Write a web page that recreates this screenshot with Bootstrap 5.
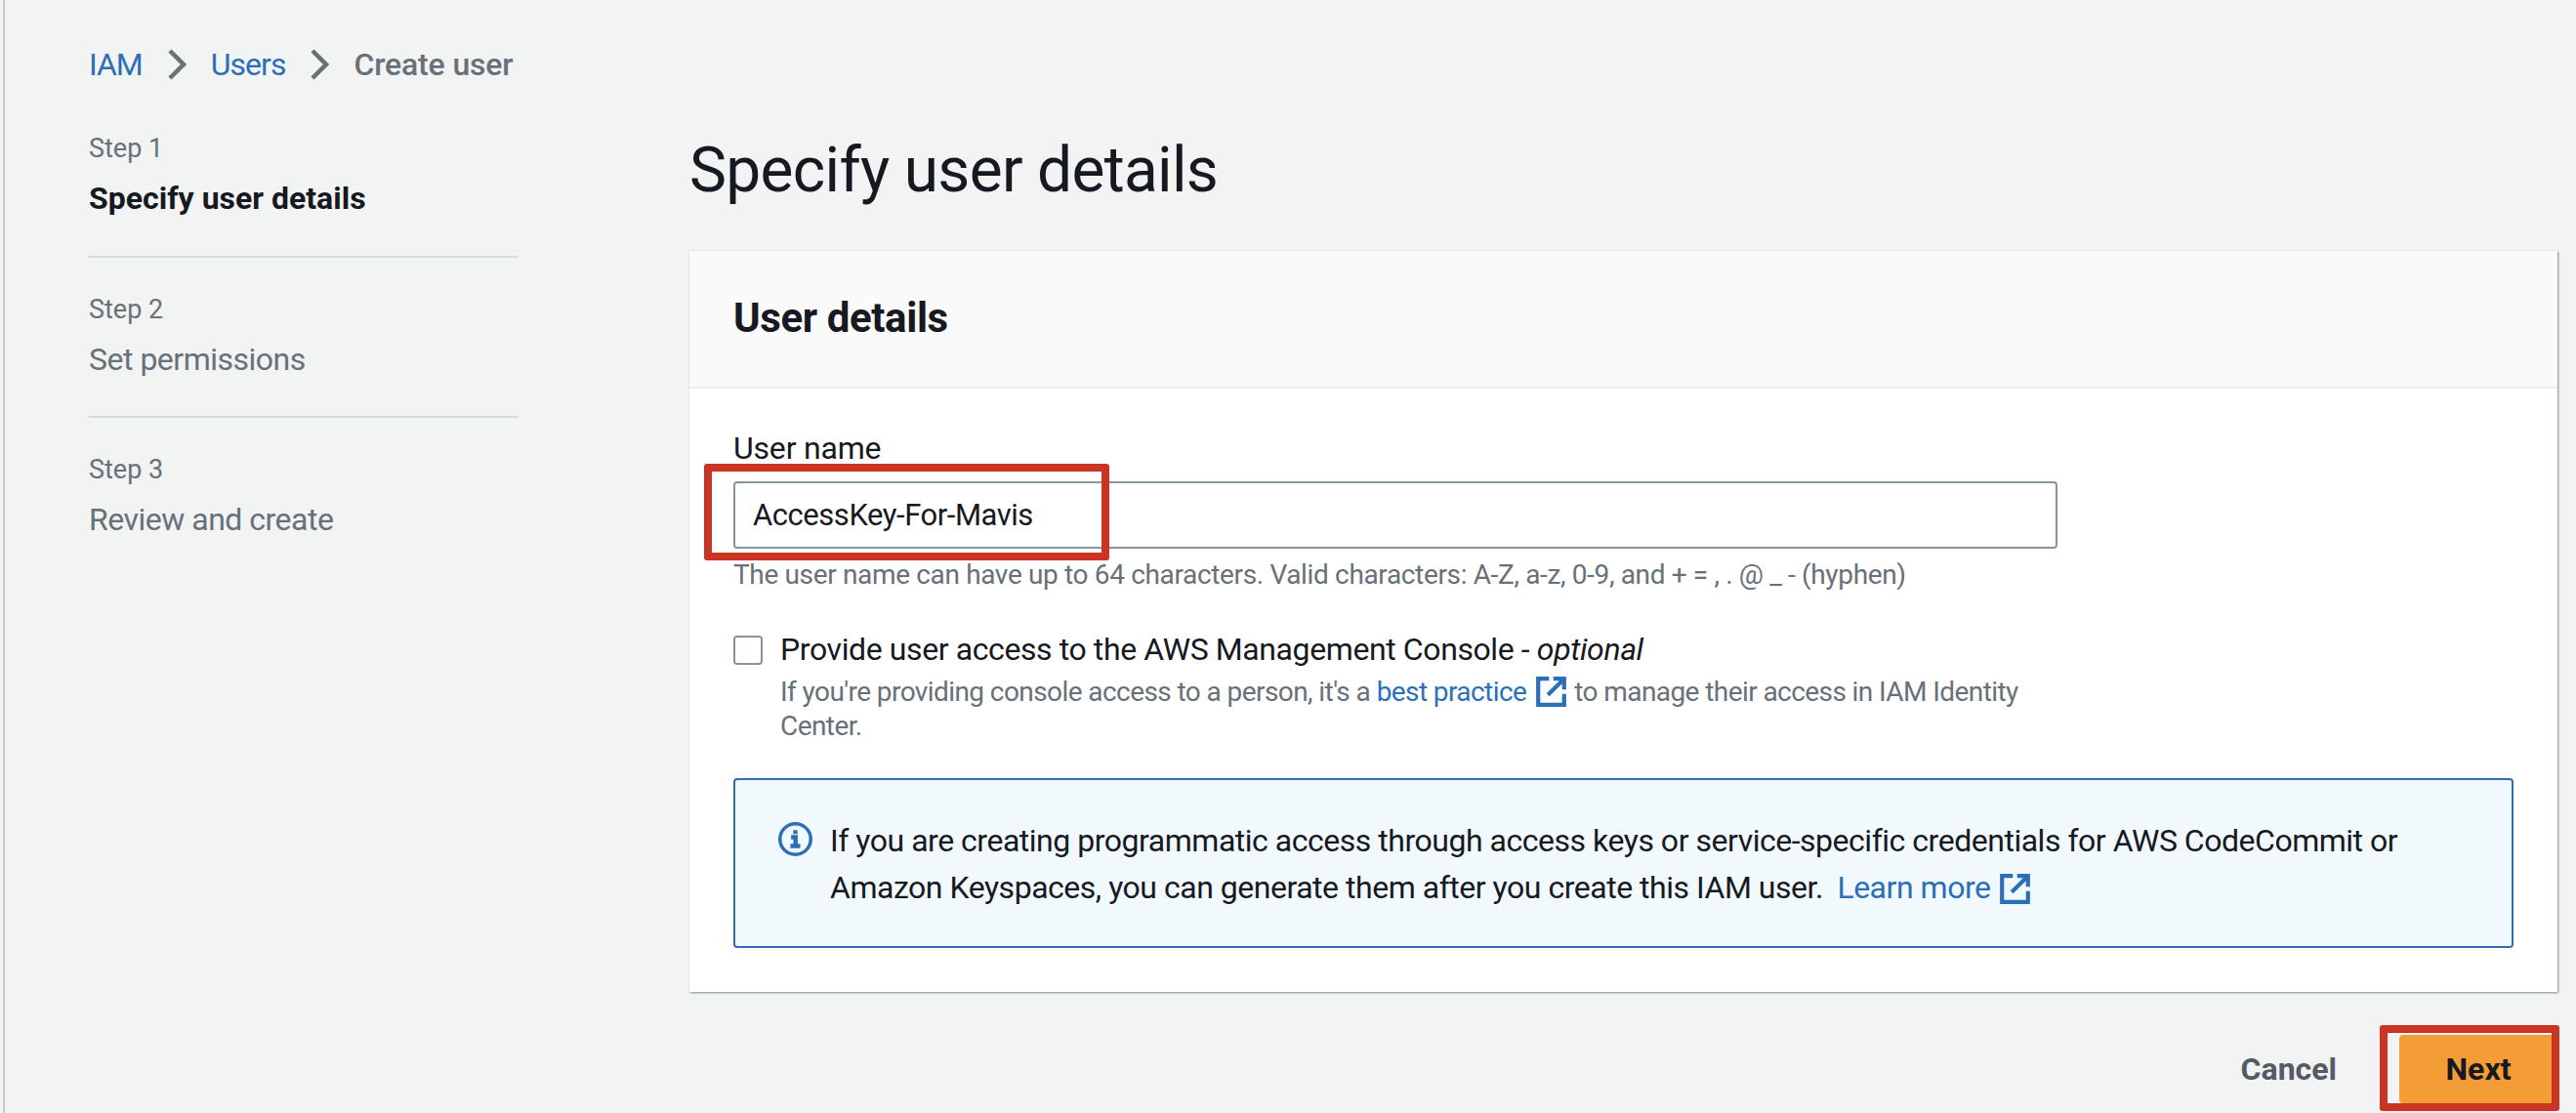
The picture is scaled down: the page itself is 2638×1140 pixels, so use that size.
<!DOCTYPE html>
<html lang="en">
<head>
  <meta charset="UTF-8">
  <meta name="viewport" content="width=device-width, initial-scale=1.0">
  <title>Create user</title>
  <link href="https://cdn.jsdelivr.net/npm/bootstrap@5.3.0/dist/css/bootstrap.min.css" rel="stylesheet">
  <style>
    html, body {
      height: 100%;
    }
    body {
      background-color: #f2f3f3;
      color: #16191f;
      font-family: Roboto, "Noto Sans", sans-serif;
      font-size: 32px;
      line-height: 40px;
      overflow: hidden;
    }
    a {
      color: #2b6fb9;
      text-decoration: none;
    }
    .page-wrap {
      height: 1140px;
      margin-left: 3px;
      border-left: 2px solid #c9cccc;
      padding: 46px 19px 0 86px;
    }
    .crumbs {
      margin: 0;
      gap: 25px;
      line-height: 40px;
      font-size: 32px;
      letter-spacing: -1px;
    }
    .crumbs svg {
      width: 20px;
      height: 32px;
    }
    .crumb-now {
      color: #687078;
      font-weight: 500;
      letter-spacing: -.15px;
    }
    .steps-col {
      width: 440px;
      margin-right: 175px;
      flex: none;
      padding-top: 46px;
    }
    .step-item {
      padding-bottom: 38.5px;
      margin-bottom: 33px;
      border-bottom: 2px solid #d5dbdb;
    }
    .step-item:last-child {
      border-bottom: 0;
    }
    .step-num {
      font-size: 27px;
      color: #687078;
      margin-bottom: 11px;
    }
    .step-title {
      font-size: 32px;
      color: #687078;
      letter-spacing: -.5px;
    }
    .step-title.is-on {
      color: #16191f;
      font-weight: 700;
      letter-spacing: 0;
    }
    .main-col {
      flex: 1;
      min-width: 0;
    }
    .page-title {
      font-size: 64px;
      line-height: 80px;
      font-weight: 400;
      letter-spacing: -.7px;
      margin: 49px 0 42px;
    }
    .panel {
      --bs-card-border-width: 0;
      --bs-card-border-radius: 0;
      --bs-card-inner-border-radius: 0;
      box-shadow: 1px 1px 2px rgba(0, 28, 36, .45), 0 0 1px rgba(0, 28, 36, .2);
    }
    .panel .card-header {
      height: 141px;
      padding: 0 45px;
      background-color: #fafafa;
      border-bottom: 2px solid #eaeded;
      display: flex;
      align-items: center;
    }
    .panel-title {
      font-size: 42px;
      font-weight: 700;
      letter-spacing: -.4px;
      margin: 0;
    }
    .panel .card-body {
      padding: 41px 45px 45px;
      letter-spacing: -.48px;
    }
    .field-label {
      display: block;
      margin-bottom: 14px;
      font-size: 32px;
      letter-spacing: -.2px;
    }
    .field-wrap {
      width: 1356px;
    }
    .field-input {
      height: 69px;
      padding: 0 18px;
      font-size: 31px;
      letter-spacing: -.45px;
      color: #16191f;
      border: 2px solid #879596;
      border-radius: 4px;
      box-shadow: none;
    }
    .field-hint {
      margin-top: 7px;
      font-size: 28px;
      letter-spacing: -.35px;
      color: #687078;
    }
    .console-check {
      display: flex;
      margin: 36px 0 0;
      padding: 0;
      gap: 18px;
      min-height: 0;
    }
    .console-check .form-check-input {
      flex: none;
      width: 30px;
      height: 30px;
      margin: 6px 0 0;
      float: none;
      border: 2px solid #879596;
      border-radius: 4px;
    }
    .console-check label {
      letter-spacing: -.4px;
    }
    .console-note {
      margin-top: 6px;
      width: 1310px;
      font-size: 28px;
      letter-spacing: -.58px;
      line-height: 35px;
      color: #687078;
    }
    .ext-icon {
      width: 31px;
      height: 31px;
      vertical-align: -6px;
      margin: 0 8px 0 10px;
    }
    .info-box {
      display: flex;
      margin: 36px 0 0;
      padding: 38px 44px 36px;
      gap: 18px;
      line-height: 48px;
      color: #16191f;
      background-color: #f2f9fd;
      border: 2px solid #2b6fb9;
      border-radius: 4px;
    }
    .info-icon {
      width: 35px;
      height: 35px;
      margin-top: 5px;
      flex: none;
    }
    .learn-link {
      margin-left: 7px;
    }
    .form-actions {
      margin-top: 44px;
      gap: 64px;
    }
    .cancel-link {
      color: #545b64;
      font-weight: 700;
      font-size: 32px;
    }
    .next-wrap {
      position: relative;
    }
    .next-btn {
      width: 162px;
      height: 70px;
      padding: 0;
      font-size: 32px;
      font-weight: 700;
      color: #16191f;
      background-color: #f49c36;
      border: 0;
      border-radius: 4px;
    }
    .red-box {
      position: absolute;
      border: 8px solid #cb3322;
      border-radius: 3px;
      pointer-events: none;
    }
    .red-input {
      left: -30px;
      top: -18px;
      width: 415px;
      height: 99px;
    }
    .red-next {
      left: -20px;
      right: -2px;
      top: -10px;
      bottom: -8px;
    }
  </style>
</head>
<body>
  <div class="page-wrap">
    <nav class="crumbs d-flex align-items-center">
      <a href="#">IAM</a>
      <svg viewBox="0 0 20 32" fill="none" stroke="#687078" stroke-width="4.5"><path d="M3 2l14 14L3 30"/></svg>
      <a href="#">Users</a>
      <svg viewBox="0 0 20 32" fill="none" stroke="#687078" stroke-width="4.5"><path d="M3 2l14 14L3 30"/></svg>
      <span class="crumb-now">Create user</span>
    </nav>

    <div class="d-flex">
      <div class="steps-col">
        <div class="step-item">
          <div class="step-num">Step 1</div>
          <div class="step-title is-on">Specify user details</div>
        </div>
        <div class="step-item">
          <div class="step-num">Step 2</div>
          <div class="step-title">Set permissions</div>
        </div>
        <div class="step-item">
          <div class="step-num">Step 3</div>
          <div class="step-title">Review and create</div>
        </div>
      </div>

      <div class="main-col">
        <h1 class="page-title">Specify user details</h1>

        <div class="card panel">
          <div class="card-header">
            <h2 class="panel-title">User details</h2>
          </div>
          <div class="card-body">
            <label class="field-label" for="userName">User name</label>
            <div class="field-wrap position-relative">
              <input class="form-control field-input" id="userName" type="text" value="AccessKey-For-Mavis">
              <div class="red-box red-input"></div>
            </div>
            <div class="field-hint">The user name can have up to 64 characters. Valid characters: A-Z, a-z, 0-9, and + = , . @ _ - (hyphen)</div>

            <div class="form-check console-check">
              <input class="form-check-input" type="checkbox" id="consoleAccess">
              <div>
                <label for="consoleAccess">Provide user access to the AWS Management Console - <em>optional</em></label>
                <div class="console-note">If you're providing console access to a person, it's a <a href="#">best practice<svg class="ext-icon" viewBox="1 1 14 14" fill="none" stroke="#2b6fb9" stroke-width="1.9"><path d="M7 2H2v12h12V9M9 2h5v5M14 2L6.5 9.5"/></svg></a>to manage their access in IAM Identity Center.</div>
              </div>
            </div>

            <div class="alert info-box" role="alert">
              <svg class="info-icon" viewBox="0 0 16 16" fill="none" stroke="#2b6fb9" stroke-width="1.6"><circle cx="8" cy="8" r="7.2"/><path d="M8 3.8v1.8M6 7.1h2.1v4M5.7 11.2h4.6" stroke-width="2"/></svg>
              <div>If you are creating programmatic access through access keys or service-specific credentials for AWS CodeCommit or Amazon Keyspaces, you can generate them after you create this IAM user. <a class="learn-link" href="#">Learn more<svg class="ext-icon" viewBox="1 1 14 14" fill="none" stroke="#2b6fb9" stroke-width="1.9"><path d="M7 2H2v12h12V9M9 2h5v5M14 2L6.5 9.5"/></svg></a></div>
            </div>
          </div>
        </div>

        <div class="form-actions d-flex justify-content-end align-items-center">
          <a class="cancel-link" href="#">Cancel</a>
          <div class="next-wrap">
            <button class="btn next-btn" type="button">Next</button>
            <div class="red-box red-next"></div>
          </div>
        </div>
      </div>
    </div>
  </div>

  <script src="https://cdn.jsdelivr.net/npm/bootstrap@5.3.0/dist/js/bootstrap.bundle.min.js"></script>
</body>
</html>
